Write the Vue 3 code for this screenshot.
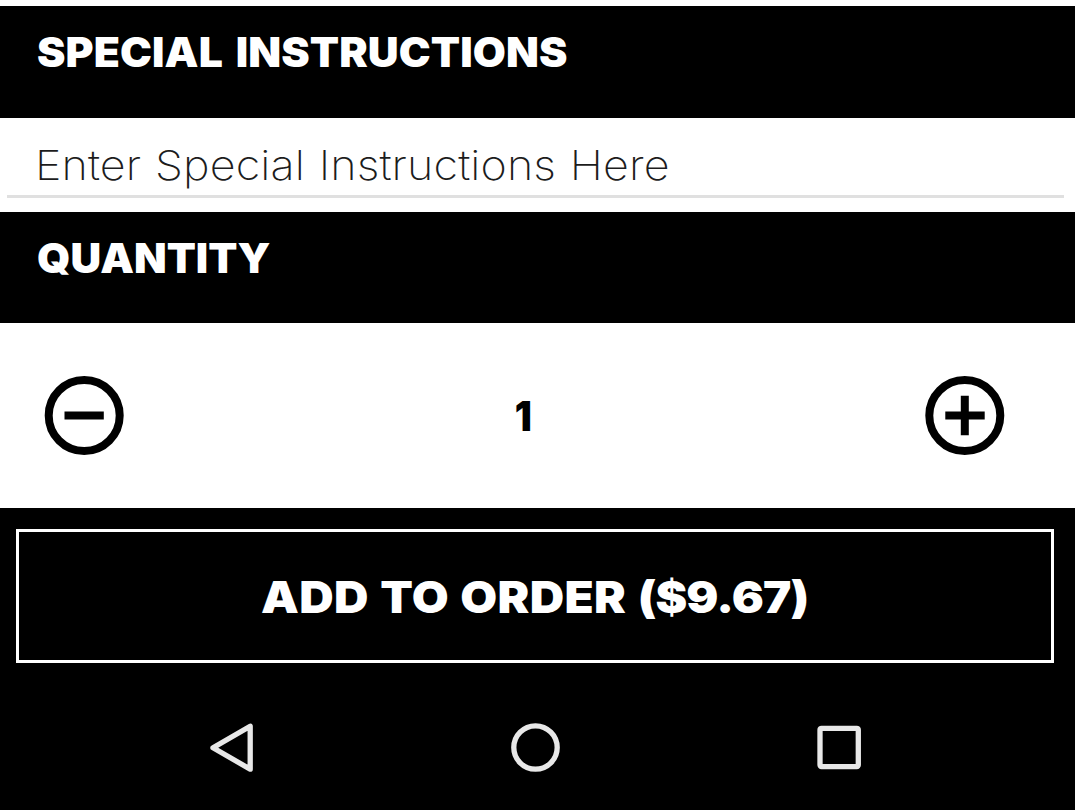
<script setup>
import { ref, computed } from 'vue'

const quantity = ref(1)
const notes = ref('')
const total = computed(() => (quantity.value * 9.67).toFixed(2))
const decrease = () => { if (quantity.value > 1) quantity.value-- }
const increase = () => { quantity.value++ }
</script>

<template>
  <main class="screen">
    <h2 class="heading special"><span>SPECIAL INSTRUCTIONS</span></h2>
    <section class="field">
      <div class="line">
        <input v-model="notes" class="notes" type="text" placeholder="Enter Special Instructions Here" />
      </div>
    </section>
    <h2 class="heading quantity"><span>QUANTITY</span></h2>
    <section class="stepper">
      <button class="step" aria-label="Decrease" @click="decrease">
        <svg viewBox="0 0 80 80" width="80" height="80">
          <circle cx="40.2" cy="39.5" r="35.5" />
          <path d="M20.5 39.5H59.8" />
        </svg>
      </button>
      <span class="count">{{ quantity }}</span>
      <button class="step" aria-label="Increase" @click="increase">
        <svg viewBox="0 0 80 80" width="80" height="80">
          <circle cx="39.8" cy="39.5" r="35.5" />
          <path d="M20.3 39.5H59.7M39.8 19.8V59.2" />
        </svg>
      </button>
    </section>
    <section class="order">
      <button class="add">
        <span class="label">ADD TO ORDER <span class="price">(${{ total }})</span></span>
      </button>
    </section>
    <nav class="system">
      <svg viewBox="0 0 50 56" width="50" height="56">
        <path d="M6 27.7L43.2 6.2V49.2Z" />
      </svg>
      <svg viewBox="0 0 56 56" width="56" height="56">
        <circle cx="27.5" cy="27.5" r="21.7" />
      </svg>
      <svg viewBox="0 0 50 56" width="50" height="56">
        <rect x="6" y="8.3" width="38.3" height="38.3" rx="1.5" />
      </svg>
    </nav>
  </main>
</template>

<style>
body { margin: 0; background: #000; }
</style>

<style scoped>
.screen {
  width: 1075px;
  height: 810px;
  box-sizing: border-box;
  padding-top: 6px;
  display: flex;
  flex-direction: column;
  overflow: hidden;
  background: #fff;
  font-family: Inter, "Liberation Sans", sans-serif;
}
.heading {
  flex: none;
  box-sizing: border-box;
  margin: 0;
  padding: 21px 36.5px 0;
  background: #000;
  color: #fff;
  font-size: 41px;
  line-height: 50px;
  font-weight: 900;
  white-space: nowrap;
}
.heading span { display: inline-block; transform-origin: 0 50%; }
.special { height: 111.5px; }
.special span { word-spacing: 4px; letter-spacing: 0.1px; transform: scaleX(1.042); }
.quantity { height: 111.5px; }
.quantity span { transform: scaleX(1.036); }
.field {
  flex: none;
  box-sizing: border-box;
  height: 94px;
  padding: 0 11px 13px 7px;
}
.line {
  box-sizing: border-box;
  height: 80.5px;
  padding: 16px 0 0 27.5px;
  border-bottom: 3px solid #e0e0e0;
}
.notes {
  display: block;
  box-sizing: border-box;
  width: 900px;
  height: 62px;
  padding: 0;
  border: 0;
  outline: 0;
  background: transparent;
  font: 250 41px/50px Inter, "Liberation Sans", sans-serif;
  letter-spacing: 0.1px;
  word-spacing: 1px;
  transform: scaleX(1.094);
  transform-origin: 0 50%;
}
.notes::placeholder { color: #1c1c1c; opacity: 1; }
.stepper {
  flex: none;
  box-sizing: border-box;
  height: 184.5px;
  padding: 1px 70px 0 44px;
  display: flex;
  align-items: center;
  justify-content: space-between;
}
.step {
  width: 80px;
  height: 80px;
  padding: 0;
  border: 0;
  background: none;
}
.step svg { display: block; fill: none; stroke: #000; stroke-width: 8; }
.count { font-size: 41px; font-weight: 900; transform: translateX(-1px) scaleX(0.92); }
.order {
  flex: none;
  box-sizing: border-box;
  height: 178px;
  padding: 21.5px 21px 0 16px;
  background: #000;
}
.add {
  display: flex;
  align-items: center;
  justify-content: center;
  box-sizing: border-box;
  width: 100%;
  height: 134px;
  padding: 1px 0 0;
  border: 3px solid #fff;
  background: #000;
  color: #fff;
  font: 900 44px/54px Inter, "Liberation Sans", sans-serif;
  word-spacing: 1.5px;
  white-space: nowrap;
}
.label { letter-spacing: 0.3px; transform: scaleX(1.083); }
.price { letter-spacing: -0.7px; }
.system {
  flex: 1;
  display: flex;
  align-items: flex-start;
  justify-content: space-between;
  padding: 34px 211px 0 207px;
  background: #000;
}
.system svg { fill: none; stroke: #e8e8e8; stroke-width: 5.3; stroke-linejoin: round; }
</style>
